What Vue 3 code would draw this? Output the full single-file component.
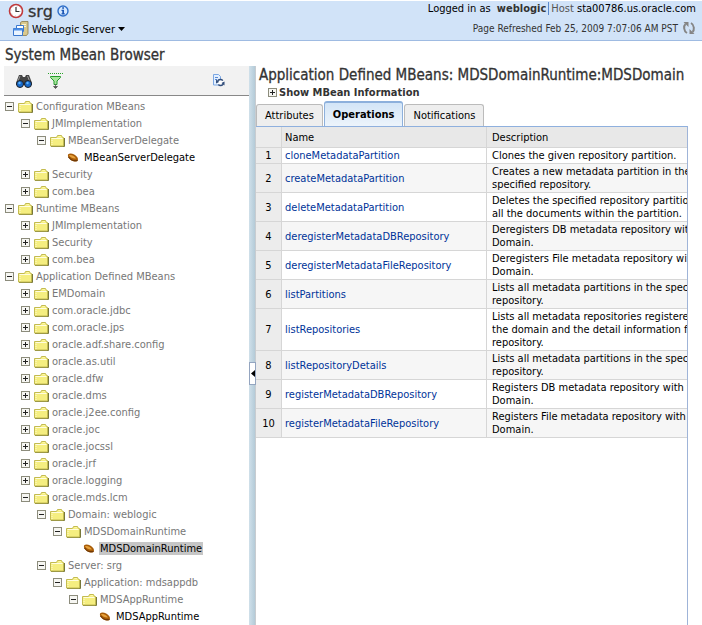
<script setup>
import { computed, ref } from "vue";

const leaf = (name) => ({ name, type: "bean" });
const closed = (name) => ({ name, open: false, children: [] });
const open = (name, children) => ({ name, open: true, children });

const tree = ref([
    open("Configuration MBeans", [
        open("JMImplementation", [
            open("MBeanServerDelegate", [leaf("MBeanServerDelegate")])
        ]),
        closed("Security"),
        closed("com.bea")
    ]),
    open("Runtime MBeans", [
        closed("JMImplementation"),
        closed("Security"),
        closed("com.bea")
    ]),
    open("Application Defined MBeans", [
        closed("EMDomain"),
        closed("com.oracle.jdbc"),
        closed("com.oracle.jps"),
        closed("oracle.adf.share.config"),
        closed("oracle.as.util"),
        closed("oracle.dfw"),
        closed("oracle.dms"),
        closed("oracle.j2ee.config"),
        closed("oracle.joc"),
        closed("oracle.jocssl"),
        closed("oracle.jrf"),
        closed("oracle.logging"),
        open("oracle.mds.lcm", [
            open("Domain: weblogic", [
                open("MDSDomainRuntime", [leaf("MDSDomainRuntime")])
            ]),
            open("Server: srg", [
                open("Application: mdsappdb", [
                    open("MDSAppRuntime", [leaf("MDSAppRuntime")])
                ])
            ])
        ])
    ])
]);

const flatten = (nodes, level = 0) =>
    nodes.flatMap((node) => [
        { node, level },
        ...(node.open ? flatten(node.children, level + 1) : [])
    ]);

const rows = computed(() => flatten(tree.value));
const selected = ref("MDSDomainRuntime");

const tabs = ["Attributes", "Operations", "Notifications"];
const activeTab = ref("Operations");

const operations = [
    { name: "cloneMetadataPartition", text: "Clones the given repository partition." },
    { name: "createMetadataPartition", text: "Creates a new metadata partition in the\nspecified repository." },
    { name: "deleteMetadataPartition", text: "Deletes the specified repository partition\nall the documents within the partition." },
    { name: "deregisterMetadataDBRepository", text: "Deregisters DB metadata repository with\nDomain." },
    { name: "deregisterMetadataFileRepository", text: "Deregisters File metadata repository with\nDomain." },
    { name: "listPartitions", text: "Lists all metadata partitions in the specified\nrepository." },
    { name: "listRepositories", text: "Lists all metadata repositories registered\nthe domain and the detail information for\nrepository." },
    { name: "listRepositoryDetails", text: "Lists all metadata partitions in the specified\nrepository." },
    { name: "registerMetadataDBRepository", text: "Registers DB metadata repository with the\nDomain." },
    { name: "registerMetadataFileRepository", text: "Registers File metadata repository with the\nDomain." }
];
</script>
<template>
    <div class="page">
        <header class="banner">
            <div class="target">
                <div class="target-name">
                    <svg width="16" height="16" viewBox="0 0 16 16">
                        <circle cx="8" cy="8" r="6.5" fill="#fff" stroke="#c0393b" stroke-width="1.6" />
                        <circle cx="8" cy="8" r="5" fill="none" stroke="#b9b9c4" stroke-dasharray="1 2.9" />
                        <path d="M8 4v4.500h3.500" fill="none" stroke="#333" stroke-width="1.200" />
                    </svg>
                    <span>srg</span>
                    <svg width="12" height="12" viewBox="0 0 12 12">
                        <circle cx="6" cy="6" r="5" fill="#d5e8ff" stroke="#2f6fc9" stroke-width="1.400" />
                        <path d="M5.200 2.200h1.800v1.600h-1.800zM4.500 4.800h2.500v3.400h.8v1.200h-3.300v-1.200h.8v-2.200h-.8z" fill="#1a55b5" />
                    </svg>
                </div>
                <button class="target-menu">
                    <svg width="16" height="16" viewBox="0 0 16 16">
                        <path d="M7.500 1.500l1.500-1h6v12l-1.500 2h-6z" fill="#d9c98e" stroke="#8a7a4a" stroke-width=".8" />
                        <path d="M9 3.500h4M9 5.500h4" stroke="#fbf4d0" />
                        <path d="M3.500 4.500h7v6h-7z" fill="#fff" stroke="#3b78cf" />
                        <path d="M.5 7.500h9v7h-9z" fill="#eaf4ff" stroke="#3b78cf" />
                        <path d="M.5 7.500h9v2h-9z" fill="#4d8fe6" />
                    </svg>
                    <span>WebLogic Server</span>
                    <svg width="7" height="4" viewBox="0 0 7 4"><path d="M0 0h7L3.500 4z" /></svg>
                </button>
            </div>
            <div class="session">
                <div class="login">
                    Logged in as <b>weblogic</b><i></i><span>Host</span> sta00786.us.oracle.com
                </div>
                <div class="refreshed">
                    Page Refreshed Feb 25, 2009 7:07:06 AM PST
                    <button aria-label="Refresh page">
                        <svg width="14" height="14" viewBox="0 0 14 14">
                            <path d="M5 12C1.500 10 1.500 5 3.500 3M9 2c3.500 2 3.500 7 1.500 9" fill="none" stroke="#858585" stroke-width="2" />
                            <path d="M1.500 1h5v5zM12.500 13h-5V8z" fill="#858585" />
                        </svg>
                    </button>
                </div>
            </div>
        </header>

        <h1>System MBean Browser</h1>

        <div class="browser">
            <aside class="navigator">
                <div class="toolbar">
                    <button aria-label="Find">
                        <svg width="16" height="16" viewBox="0 0 16 16">
                            <path d="M3 2h3l1 2h2l1-2h3l3 8v2H0v-2z" fill="#444" />
                            <path d="M4 3l-2 5M11.500 3l2 5" stroke="#999" />
                            <circle cx="4" cy="11" r="3.500" fill="#1668c9" stroke="#222" />
                            <circle cx="12" cy="11" r="3.500" fill="#1668c9" stroke="#222" />
                            <circle cx="3.500" cy="10" r="1.200" fill="#5db4ff" />
                            <circle cx="11.500" cy="10" r="1.200" fill="#5db4ff" />
                        </svg>
                    </button>
                    <button aria-label="Filter">
                        <svg width="16" height="16" viewBox="0 0 16 16">
                            <path d="M0 .5h15" stroke="#28a428" stroke-dasharray="1 1" />
                            <path d="M2.500 3.500h10v1L9 8v3.500H6V8L2.500 4.500z" fill="#a8e69d" stroke="#259b2c" />
                            <path d="M7.500 11v3M5.500 13.500h4L7.500 15.500z" fill="#555" stroke="#555" stroke-width=".8" />
                        </svg>
                    </button>
                    <button class="refresh-tree" aria-label="Refresh tree">
                        <svg width="13" height="13" viewBox="0 0 13 13">
                            <path d="M1.500.5h5l2 2v8.500h-7z" fill="#e4f0ff" stroke="#7ba7e3" />
                            <path d="M3 3.500h3M3 5.500h2" stroke="#5b8bd4" />
                            <circle cx="8.500" cy="8.500" r="3" fill="#fff" stroke="#334f7c" stroke-width="1.300" stroke-dasharray="7 2.400" />
                            <path d="M4 5.500v4l3-1.500zM12.500 11.500v-4l-3 1.500z" fill="#334f7c" />
                        </svg>
                    </button>
                </div>
                <ul class="tree">
                    <li
                        v-for="({ node, level }, index) in rows"
                        :key="index"
                        :class="{ bean: node.type }"
                        :style="{ paddingLeft: level * 16 + 'px' }"
                    >
                        <button
                            v-if="!node.type"
                            class="toggle"
                            :class="{ plus: !node.open }"
                            :aria-label="node.name"
                            @click="node.open = !node.open"
                        ></button>
                        <span v-else class="no-toggle"></span>
                        <svg v-if="node.type" width="16" height="12" viewBox="0 0 16 12">
                            <path d="M2 2.500C4 .5 9 2 11.500 5.500c1 2 .5 4-1.500 4C7 10 1 7 2 2.500z" fill="#a85c08" />
                            <path d="M3 3c3-.5 5.500 1 7 3.500C7 7 4 5.500 3 3z" fill="#e7a23c" />
                            <path d="M2.500 5c2 3 5.500 4.500 9 3.500" fill="none" stroke="#5b2c04" />
                        </svg>
                        <svg v-else width="16" height="12" viewBox="0 0 16 12">
                            <path d="M1 11.500h13.500V3" fill="none" stroke="#77773a" />
                            <path d="M.5 2.500h6l1-2h4l1 2h1v8.500H.5z" fill="#f5ee80" stroke="#c3bb50" />
                            <path d="M1.500 3.500h11" stroke="#fffde0" />
                            <path d="M2 10V4.500" stroke="#fffbd0" stroke-dasharray="1 1" />
                            <path d="M8.500 1.500h2.500" stroke="#fff9a5" />
                        </svg>
                        <a href="#" :class="{ selected: node.type && node.name === selected }" @click.prevent="selected = node.name">{{ node.name }}</a>
                    </li>
                </ul>
            </aside>

            <div class="splitter">
                <button aria-label="Collapse pane">
                    <svg width="4" height="7" viewBox="0 0 4 7"><path d="M4 0v7L0 3.500z" /></svg>
                </button>
            </div>

            <main class="detail">
                <h2>Application Defined MBeans: MDSDomainRuntime:MDSDomain</h2>
                <div class="disclosure">
                    <button id="show-info" class="toggle plus" aria-label="Show MBean Information"></button>
                    <label for="show-info">Show MBean Information</label>
                </div>
                <nav class="tabs">
                    <button
                        v-for="tab in tabs"
                        :key="tab"
                        :class="{ active: tab === activeTab }"
                        @click="activeTab = tab"
                    >{{ tab }}</button>
                </nav>
                <div class="panel">
                    <table>
                        <thead>
                            <tr>
                                <th class="num"></th>
                                <th class="name">Name</th>
                                <th>Description</th>
                            </tr>
                        </thead>
                        <tbody>
                            <tr v-for="(operation, index) in operations" :key="operation.name">
                                <td class="num">{{ index + 1 }}</td>
                                <td class="name"><a href="#">{{ operation.name }}</a></td>
                                <td>{{ operation.text }}</td>
                            </tr>
                        </tbody>
                    </table>
                </div>
            </main>
        </div>
    </div>
</template>
<style>
body {
    background: #fff;
}
</style>
<style scoped>
.page {
    display: flex;
    flex-direction: column;
    min-height: 100vh;
    font-family: "DejaVu Sans Condensed", Tahoma, sans-serif;
    font-size: 11px;
    line-height: 13px;
    color: #000;
}

button {
    padding: 0;
    border: 0;
    background: none;
    font: inherit;
    color: inherit;
    cursor: pointer;
}

svg {
    display: block;
    flex: none;
}

a {
    text-decoration: none;
}

h1,
h2 {
    margin: 0;
    font-size: 15px;
    font-weight: normal;
    line-height: 18px;
    color: #333;
    white-space: nowrap;
    -webkit-text-stroke: 0.3px #333;
}

.banner {
    display: flex;
    justify-content: space-between;
    height: 41px;
    border-top: 1px solid #fff;
    border-bottom: 1px solid #9fbbe2;
    background: #d1e3f8;
    box-sizing: border-box;
    flex: none;
    white-space: nowrap;
}

.target-name {
    display: flex;
    align-items: center;
    gap: 4px;
    height: 20px;
    padding-left: 8px;
    font-family: "DejaVu Sans", Verdana, sans-serif;
    font-size: 16px;
    color: #333;
    -webkit-text-stroke: 0.3px #333;
}

.target-menu {
    display: flex;
    align-items: center;
    gap: 3px;
    padding-left: 13px;
}

.session {
    padding: 1px 6px 0 0;
    text-align: right;
}

.login b {
    margin-left: 3px;
    color: #333;
}

.login i {
    margin: 0 2px;
    border-left: 1px solid #5b8bd0;
}

.login span {
    color: #555;
}

.refreshed {
    display: flex;
    align-items: center;
    justify-content: flex-end;
    gap: 4px;
    margin-top: 6px;
    font-size: 10px;
    color: #333;
}

h1 {
    padding: 5px 0 2px 5px;
}

.browser {
    display: flex;
    flex: 1;
}

.navigator {
    flex: 0 0 245px;
    padding-left: 4px;
}

.toolbar {
    display: flex;
    align-items: center;
    gap: 16px;
    height: 29px;
    padding: 0 24px 0 12px;
    border-bottom: 1px solid #888;
    background: #f2f2f2;
}

.refresh-tree {
    margin-left: auto;
}

.tree {
    margin: 0;
    padding: 2px 0 0 1px;
    list-style: none;
}

.tree li {
    display: flex;
    align-items: center;
    height: 17px;
    white-space: nowrap;
}

.tree svg {
    margin: 0 1px 0 4px;
}

.tree a {
    padding: 0 1px;
    color: #777;
}

.tree .bean a {
    color: #000;
}

.tree a.selected {
    background: #c6c6c6;
}

.toggle {
    width: 9px;
    height: 9px;
    border: 1px solid #8c8c7c;
    background: linear-gradient(#222, #222) center / 5px 1px no-repeat #f6f6f2;
    box-sizing: border-box;
}

.toggle.plus {
    background:
        linear-gradient(#222, #222) center / 5px 1px no-repeat,
        linear-gradient(#222, #222) center / 1px 5px no-repeat #f6f6f2;
}

.no-toggle {
    width: 9px;
}

.splitter {
    position: relative;
    flex: 0 0 7px;
    border-right: 1px solid #c8ccd0;
    background: linear-gradient(90deg, #d0e0ea, #b4cbd8);
    box-sizing: border-box;
}

.splitter button {
    position: absolute;
    top: 53%;
    left: 0;
    width: 7px;
    height: 23px;
    padding-left: 1px;
    border: 1px solid #94a5c0;
    background: #fff;
}

.detail {
    display: flex;
    flex-direction: column;
    flex: 1;
    min-width: 0;
    padding-right: 14px;
}

.detail h2 {
    padding-left: 3px;
}

.disclosure {
    display: flex;
    align-items: center;
    gap: 2px;
    height: 16px;
    padding-left: 12px;
    font-weight: bold;
    color: #333;
}

.tabs {
    display: flex;
    align-items: flex-end;
    gap: 1px;
    height: 26px;
}

.tabs button {
    height: 22px;
    padding: 0 8px;
    border: 1px solid #bbb;
    border-bottom: 0;
    border-radius: 3px 3px 0 0;
    background: #eee;
}

.tabs .active {
    height: 25px;
    border-color: #8db0dc;
    border-top-width: 2px;
    background: linear-gradient(#d3e5f7, #edf4fb);
    font-weight: bold;
}

.panel {
    flex: 1;
    border-top: 1px solid #8fb0de;
    border-right: 1px solid #9fb4d8;
    overflow: hidden;
}

table {
    width: 100%;
    border-spacing: 0;
    table-layout: fixed;
}

th,
td {
    padding: 1px 5px;
    border-right: 1px solid #d6d6d6;
    border-bottom: 1px solid #d6d6d6;
    white-space: pre;
}

th {
    height: 18px;
    background: #e8e8e8;
    font-weight: normal;
    text-align: left;
}

th:last-child,
td:last-child {
    border-right: 0;
}

tbody tr:nth-child(even) {
    background: #f6f6f6;
}

.num {
    width: 26px;
    padding: 0;
    background: #ececec;
    text-align: center;
    box-sizing: border-box;
}

.name {
    width: 205px;
    padding-left: 3px;
    box-sizing: border-box;
}

.name a {
    color: #003399;
}
</style>
